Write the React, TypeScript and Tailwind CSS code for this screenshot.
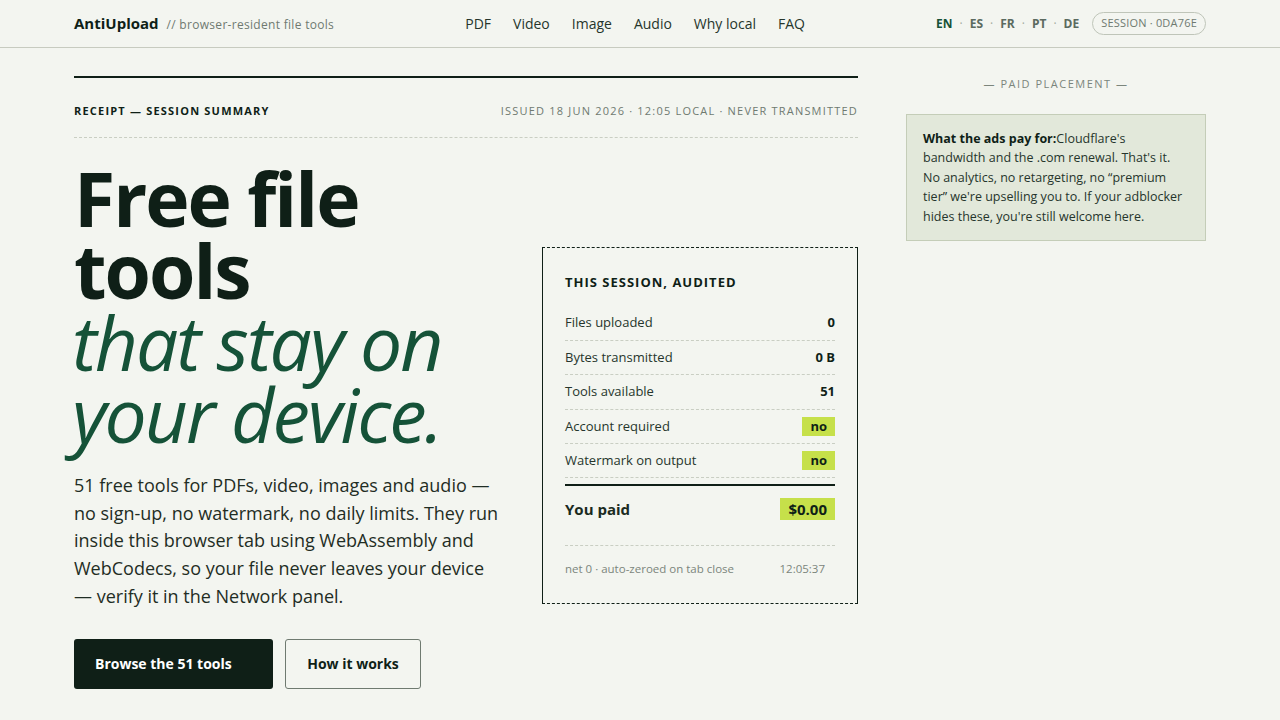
import React from "react";

const font = { fontFamily: '"Open Sans", "Noto Sans", sans-serif' };

function Row({ label, value, hl }: { label: string; value: string; hl?: boolean }) {
  return (
    <div className="flex items-center justify-between h-[34.4px] border-b border-dashed border-[#c9cec3]">
      <span className="text-[13px] text-[#26352c]">{label}</span>
      {hl ? (
        <span className="bg-[#c6e04a] px-[8px] h-[19px] leading-[19px] text-[13px] font-bold text-[#0f1f17]">{value}</span>
      ) : (
        <span className="text-[13px] font-bold text-[#0f1f17]">{value}</span>
      )}
    </div>
  );
}

export default function App() {
  return (
    <div style={font} className="min-h-[720px] bg-[#f3f5f0] text-[#0f1f17]">
      <header className="h-[48px] border-b border-[#c7cbc0]">
        <div className="mx-[74px] h-full flex items-center justify-between">
          <div className="flex items-baseline gap-[8px]">
            <span className="text-[15px] font-bold text-[#0f1f17]">AntiUpload</span>
            <span className="text-[12px] text-[#6f7a70] tracking-[0.3px]">// browser-resident file tools</span>
          </div>
          <nav className="flex items-center gap-[22px] text-[14px] text-[#26352c]">
            <span>PDF</span>
            <span>Video</span>
            <span>Image</span>
            <span>Audio</span>
            <span>Why local</span>
            <span>FAQ</span>
          </nav>
          <div className="flex items-center gap-[13px]">
            <div className="flex items-center gap-[7px] text-[12px] font-bold text-[#5b6a5f]">
              <span className="text-[#155238]">EN</span>
              <span className="text-[#a4ac9f] font-normal">·</span>
              <span>ES</span>
              <span className="text-[#a4ac9f] font-normal">·</span>
              <span>FR</span>
              <span className="text-[#a4ac9f] font-normal">·</span>
              <span>PT</span>
              <span className="text-[#a4ac9f] font-normal">·</span>
              <span>DE</span>
            </div>
            <span className="h-[23px] px-[8px] rounded-full border border-[#bfc5b9] text-[11px] text-[#6f7a70] flex items-center tracking-[0.2px]">
              SESSION · 0DA76E
            </span>
          </div>
        </div>
      </header>

      <main className="mx-[74px] flex gap-[48px] pt-[28px]">
        <section className="w-[784px]">
          <div className="border-t-2 border-[#0f1f17] h-[62px] flex items-end justify-between border-b border-b-[#c9cec3] border-dashed pb-[18px]" style={{ borderTopStyle: "solid" }}>
            <span className="text-[11px] font-bold tracking-[1.2px] text-[#0f1f17]">RECEIPT — SESSION SUMMARY</span>
            <span className="text-[11px] tracking-[1.2px] text-[#6f7a70]">ISSUED 18 JUN 2026 · 12:05 LOCAL · NEVER TRANSMITTED</span>
          </div>

          <div className="flex items-start justify-between pt-[24px]">
            <div className="w-[440px]">
              <h1 className="text-[75px] leading-[72px] tracking-[-2px]">
                <span className="block font-bold text-[#0f1f17]">Free file<br />tools</span>
                <span className="block italic font-normal text-[#155238] -ml-[2px]">that stay on<br />your device.</span>
              </h1>
              <p className="mt-[22px] w-[430px] text-[18px] leading-[27.7px] text-[#1f2d24]">
                51 free tools for PDFs, video, images and audio — no sign-up, no watermark, no daily limits. They run inside this browser tab using WebAssembly and WebCodecs, so your file never leaves your device — verify it in the Network panel.
              </p>
              <div className="mt-[28px] flex gap-[12px]">
                <button className="w-[199px] h-[50px] rounded-[3px] bg-[#0f1f17] text-white text-[14px] font-bold text-left pl-[21px]">Browse the 51 tools</button>
                <button className="w-[136px] h-[50px] rounded-[3px] border border-[#6f7a70] text-[#0f1f17] text-[14px] font-bold">How it works</button>
              </div>
            </div>

            <div className="mt-[85px] w-[316px] h-[357px] border-x border-[#0f1f17] border-y border-y-[#0f1f17] border-dashed px-[22px] pt-[25px]" style={{ borderLeftStyle: "solid", borderRightStyle: "solid" }}>
              <div className="text-[13px] font-bold tracking-[1px] text-[#0f1f17] mb-[14px]">THIS SESSION, AUDITED</div>
              <Row label="Files uploaded" value="0" />
              <Row label="Bytes transmitted" value="0 B" />
              <Row label="Tools available" value="51" />
              <Row label="Account required" value="no" hl />
              <Row label="Watermark on output" value="no" hl />
              <div className="mt-[6px] border-t-2 border-[#0f1f17] h-[62px] flex items-center justify-between border-b border-b-[#c9cec3] border-dashed pb-[13px]" style={{ borderTopStyle: "solid" }}>
                <span className="text-[15px] font-bold text-[#1a2a21]">You paid</span>
                <span className="bg-[#c6e04a] px-[8px] h-[22px] leading-[22px] text-[15px] font-bold text-[#0f1f17]">$0.00</span>
              </div>
              <div className="flex justify-between pt-[14px] text-[11.5px] text-[#7b857c]">
                <span>net 0 · auto-zeroed on tab close</span>
                <span className="mr-[10px]">12:05:37</span>
              </div>
            </div>
          </div>
        </section>

        <aside className="w-[300px]">
          <div className="text-center text-[11px] tracking-[1.5px] text-[#7b857c]">— PAID PLACEMENT —</div>
          <div className="mt-[21px] bg-[#e2e8da] border border-[#c4cdb8] px-[16px] pt-[14px] pb-[14px] text-[12.5px] leading-[19.5px] text-[#26352c]">
            <b className="text-[#0f1f17]">What the ads pay for:</b>Cloudflare's bandwidth and the .com renewal. That's it. No analytics, no retargeting, no “premium tier” we're upselling you to. If your adblocker hides these, you're still welcome here.
          </div>
        </aside>
      </main>
    </div>
  );
}
